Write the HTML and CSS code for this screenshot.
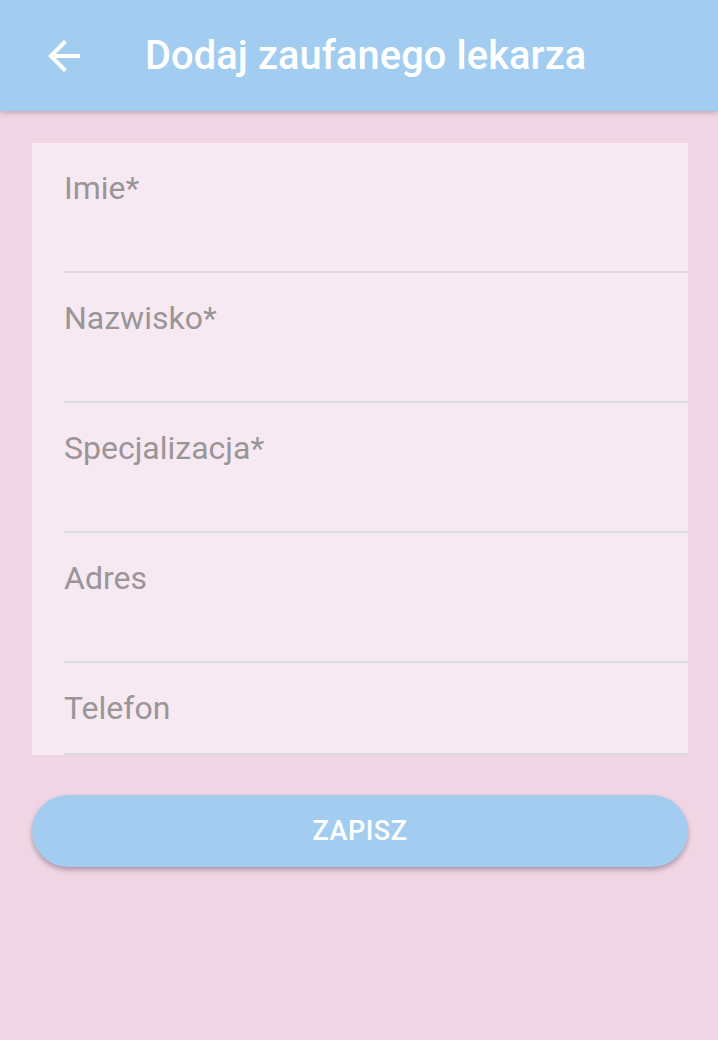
FILE: index.html
```html
<!DOCTYPE html>
<html lang="pl">
<head>
<meta charset="utf-8">
<link rel="stylesheet" href="styles.css">
</head>
<body>
<header class="appbar">
  <svg class="back" width="48" height="48" viewBox="0 0 24 24"><path d="M20 11H7.83l5.59-5.59L12 4l-8 8 8 8 1.41-1.41L7.83 13H20v-2z" fill="#fff"/></svg>
  <h1 class="title">Dodaj zaufanego lekarza</h1>
</header>
<main class="content">
  <form class="card">
    <div class="field"><span class="label">Imie*</span></div>
    <div class="field"><span class="label">Nazwisko*</span></div>
    <div class="field"><span class="label">Specjalizacja*</span></div>
    <div class="field"><span class="label">Adres</span></div>
    <div class="field last"><span class="label">Telefon</span></div>
  </form>
  <button class="save" type="button">ZAPISZ</button>
</main>
</body>
</html>
```
FILE: styles.css
```css
html, body { margin: 0; padding: 0; }
body {
  background: #f0d6e4;
  font-family: Roboto, "Noto Sans", sans-serif;
  width: 718px;
  height: 1040px;
  overflow: hidden;
}
.appbar {
  height: 111px;
  background: #a3cdf0;
  display: flex;
  align-items: center;
  box-shadow: 0 2px 5px rgba(120, 80, 100, 0.35);
  position: relative;
  z-index: 1;
}
.back { margin-left: 40px; margin-right: 57px; flex: none; }
.title {
  margin: 0;
  color: #fff;
  font-weight: 500;
  font-size: 39.8px;
  letter-spacing: 0.1px;
}
.content { padding: 32px 30px 0 32px; }
.card {
  background: #f6e9f2;
  display: flex;
  flex-direction: column;
  margin: 0;
}
.field {
  height: 128px;
  margin-left: 32px;
  border-bottom: 2px solid #dedcde;
}
.field.last { height: 90px; }
.label {
  display: block;
  padding-top: 26px;
  color: #9a9597;
  font-size: 32px;
  line-height: 38px;
}
.save {
  display: block;
  width: 656px;
  height: 72px;
  margin-top: 40px;
  border: none;
  border-radius: 36px;
  background: #a3cdf0;
  color: #fff;
  font-family: Roboto, sans-serif;
  font-weight: 500;
  font-size: 27px;
  letter-spacing: 0.5px;
  box-shadow: 0 3px 5px rgba(100, 70, 90, 0.45);
}
```
